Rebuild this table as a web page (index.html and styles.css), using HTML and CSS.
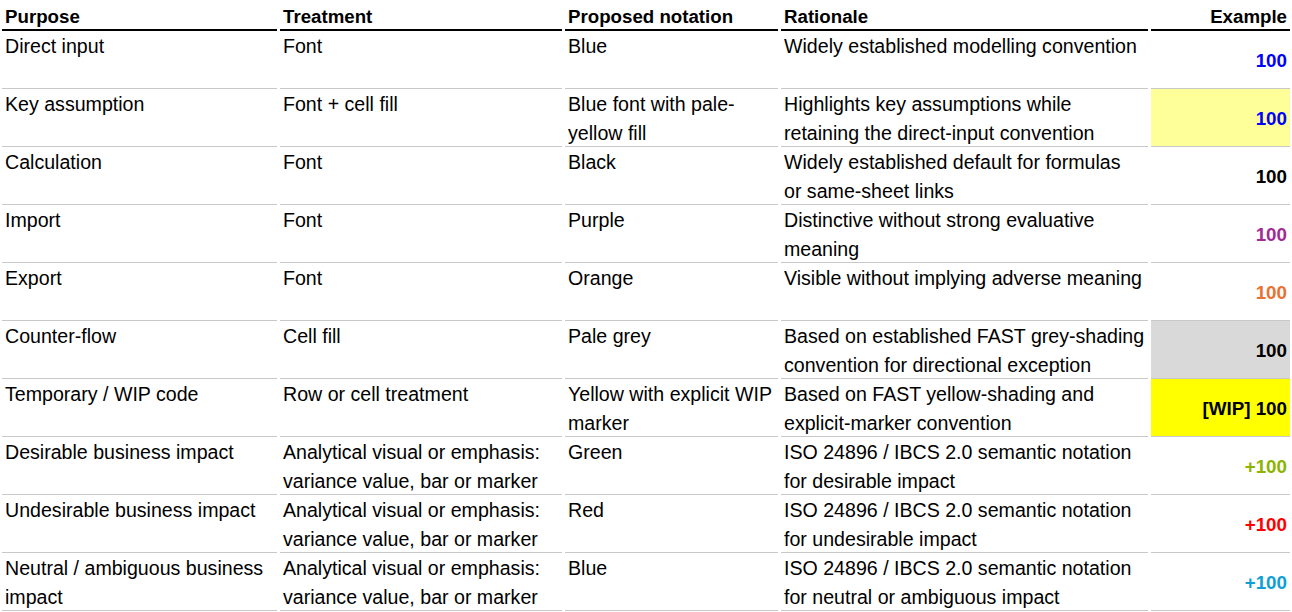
FILE: index.html
```html
<!DOCTYPE html>
<html lang="en">
<head>
<meta charset="utf-8">
<title>Notation conventions</title>
<link rel="stylesheet" href="styles.css">
</head>
<body>
<div class="sheet">
  <div class="th">Purpose</div>
  <div class="th">Treatment</div>
  <div class="th">Proposed notation</div>
  <div class="th">Rationale</div>
  <div class="th ex-h">Example</div>

  <div class="td">Direct input</div>
  <div class="td">Font</div>
  <div class="td">Blue</div>
  <div class="td">Widely established modelling convention</div>
  <div class="td ex c-blue">100</div>

  <div class="td">Key assumption</div>
  <div class="td">Font + cell fill</div>
  <div class="td">Blue font with pale-yellow fill</div>
  <div class="td">Highlights key assumptions while retaining the direct-input convention</div>
  <div class="td ex c-blue f-paleyellow">100</div>

  <div class="td">Calculation</div>
  <div class="td">Font</div>
  <div class="td">Black</div>
  <div class="td">Widely established default for formulas<br>or same-sheet links</div>
  <div class="td ex c-black">100</div>

  <div class="td">Import</div>
  <div class="td">Font</div>
  <div class="td">Purple</div>
  <div class="td">Distinctive without strong evaluative meaning</div>
  <div class="td ex c-purple">100</div>

  <div class="td">Export</div>
  <div class="td">Font</div>
  <div class="td">Orange</div>
  <div class="td">Visible without implying adverse meaning</div>
  <div class="td ex c-orange">100</div>

  <div class="td">Counter-flow</div>
  <div class="td">Cell fill</div>
  <div class="td">Pale grey</div>
  <div class="td">Based on established FAST grey-shading convention for directional exception</div>
  <div class="td ex c-black f-grey">100</div>

  <div class="td">Temporary / WIP code</div>
  <div class="td">Row or cell treatment</div>
  <div class="td">Yellow with explicit WIP marker</div>
  <div class="td">Based on FAST yellow-shading and explicit-marker convention</div>
  <div class="td ex c-black f-yellow">[WIP] 100</div>

  <div class="td">Desirable business impact</div>
  <div class="td">Analytical visual or emphasis: variance value, bar or marker</div>
  <div class="td">Green</div>
  <div class="td">ISO 24896 / IBCS 2.0 semantic notation for desirable impact</div>
  <div class="td ex c-green">+100</div>

  <div class="td">Undesirable business impact</div>
  <div class="td">Analytical visual or emphasis: variance value, bar or marker</div>
  <div class="td">Red</div>
  <div class="td">ISO 24896 / IBCS 2.0 semantic notation for undesirable impact</div>
  <div class="td ex c-red">+100</div>

  <div class="td">Neutral / ambiguous business impact</div>
  <div class="td">Analytical visual or emphasis: variance value, bar or marker</div>
  <div class="td">Blue</div>
  <div class="td">ISO 24896 / IBCS 2.0 semantic notation for neutral or ambiguous impact</div>
  <div class="td ex c-cyan">+100</div>
</div>
</body>
</html>
```

FILE: styles.css
```css
html, body {
  margin: 0;
  padding: 0;
  background: #ffffff;
}

body {
  font-family: "Liberation Sans", Arial, sans-serif;
  color: #000000;
}

.sheet {
  display: grid;
  grid-template-columns: 275px 282px 213px 367px 139px;
  grid-template-rows: 31px repeat(10, 58px);
  column-gap: 3px;
  margin-left: 2px;
}

.th {
  box-sizing: border-box;
  border-bottom: 2px solid #000000;
  font-weight: bold;
  font-size: 18.7px;
  line-height: 29px;
  padding: 2px 3px 0 3px;
  white-space: nowrap;
}

.ex-h {
  text-align: right;
}

.td {
  box-sizing: border-box;
  border-bottom: 1px solid #c8c8c8;
  font-size: 19.6px;
  line-height: 29px;
  padding: 1px 0 0 3px;
}

.ex {
  display: flex;
  align-items: center;
  justify-content: flex-end;
  font-weight: bold;
  font-size: 18.8px;
  padding: 1px 3px 0 3px;
}

.c-blue { color: #0000ff; }
.c-black { color: #000000; }
.c-purple { color: #a02b93; }
.c-orange { color: #e97132; }
.c-green { color: #8cb400; }
.c-red { color: #ff0000; }
.c-cyan { color: #0f9ed5; }

.f-paleyellow { background: #ffff99; }
.f-grey { background: #d9d9d9; }
.f-yellow { background: #ffff00; }
```
